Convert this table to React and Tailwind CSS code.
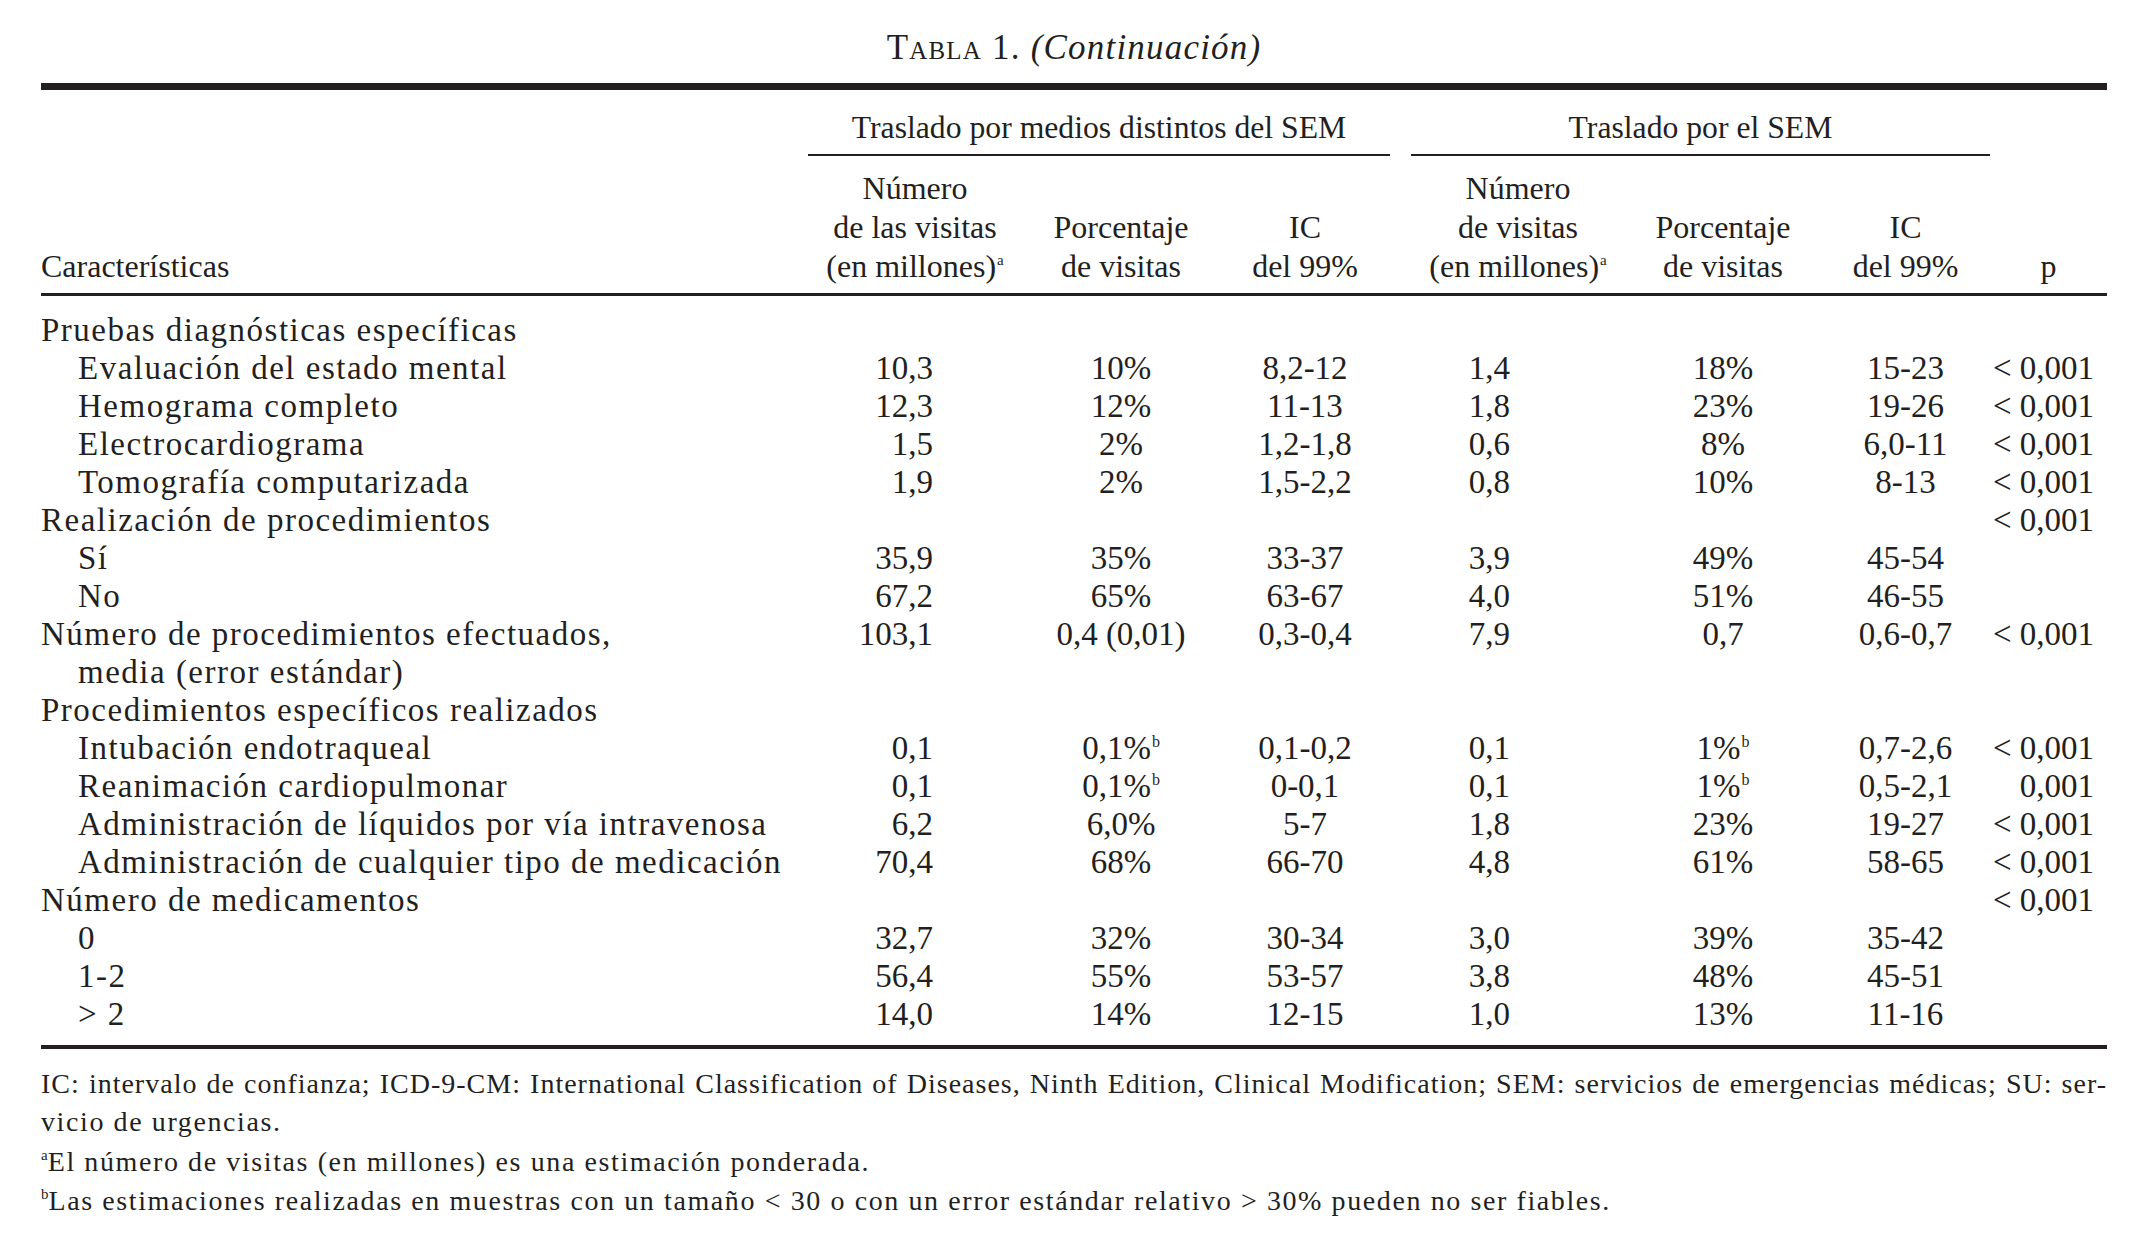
import React from "react";

const GRID =
  "grid grid-cols-[767px_214px_198px_170px_21px_214px_196px_169px_117px]";

const rows = [
  { label: "Pruebas diagnósticas específicas" },
  { label: "Evaluación del estado mental", indent: true, v: ["10,3", "10%", "8,2-12", "1,4", "18%", "15-23", "< 0,001"] },
  { label: "Hemograma completo", indent: true, v: ["12,3", "12%", "11-13", "1,8", "23%", "19-26", "< 0,001"] },
  { label: "Electrocardiograma", indent: true, v: ["1,5", "2%", "1,2-1,8", "0,6", "8%", "6,0-11", "< 0,001"] },
  { label: "Tomografía computarizada", indent: true, v: ["1,9", "2%", "1,5-2,2", "0,8", "10%", "8-13", "< 0,001"] },
  { label: "Realización de procedimientos", v: ["", "", "", "", "", "", "< 0,001"] },
  { label: "Sí", indent: true, v: ["35,9", "35%", "33-37", "3,9", "49%", "45-54", ""] },
  { label: "No", indent: true, v: ["67,2", "65%", "63-67", "4,0", "51%", "46-55", ""] },
  { label: "Número de procedimientos efectuados,", v: ["103,1", "0,4 (0,01)", "0,3-0,4", "7,9", "0,7", "0,6-0,7", "< 0,001"] },
  { label: "media (error estándar)", indent: true },
  { label: "Procedimientos específicos realizados" },
  { label: "Intubación endotraqueal", indent: true, v: ["0,1", ["0,1%", "b"], "0,1-0,2", "0,1", ["1%", "b"], "0,7-2,6", "< 0,001"] },
  { label: "Reanimación cardiopulmonar", indent: true, v: ["0,1", ["0,1%", "b"], "0-0,1", "0,1", ["1%", "b"], "0,5-2,1", "0,001"] },
  { label: "Administración de líquidos por vía intravenosa", indent: true, v: ["6,2", "6,0%", "5-7", "1,8", "23%", "19-27", "< 0,001"] },
  { label: "Administración de cualquier tipo de medicación", indent: true, v: ["70,4", "68%", "66-70", "4,8", "61%", "58-65", "< 0,001"] },
  { label: "Número de medicamentos", v: ["", "", "", "", "", "", "< 0,001"] },
  { label: "0", indent: true, v: ["32,7", "32%", "30-34", "3,0", "39%", "35-42", ""] },
  { label: "1-2", indent: true, v: ["56,4", "55%", "53-57", "3,8", "48%", "45-51", ""] },
  { label: "> 2", indent: true, v: ["14,0", "14%", "12-15", "1,0", "13%", "11-16", ""] },
];

function Val({ x }) {
  if (Array.isArray(x)) {
    return (
      <>
        {x[0]}
        <sup className="text-[16px] -top-[12px] ml-[1px]">{x[1]}</sup>
      </>
    );
  }
  return <>{x}</>;
}

function BodyRow({ r }) {
  const v = r.v || ["", "", "", "", "", "", ""];
  return (
    <div className={`${GRID} leading-[38px] whitespace-nowrap`}>
      <div className={`${r.indent ? "pl-[37px]" : ""} tracking-[1.5px]`}>{r.label}</div>
      <div className="text-right pr-[89px]"><Val x={v[0]} /></div>
      <div className="text-center"><Val x={v[1]} /></div>
      <div className="text-center"><Val x={v[2]} /></div>
      <div />
      <div className="text-right pr-[115px]"><Val x={v[3]} /></div>
      <div className="text-center"><Val x={v[4]} /></div>
      <div className="text-center"><Val x={v[5]} /></div>
      <div className="text-right pr-[13px]"><Val x={v[6]} /></div>
    </div>
  );
}

function SupA() {
  return <sup className="text-[15px] -top-[12px] ml-[1px]">a</sup>;
}

export default function App() {
  return (
    <div className="w-[2141px] h-[1254px] bg-white text-[#231f20] font-['Liberation_Serif',serif] overflow-hidden">
      <div className="ml-[41px] w-[2066px]">
        {/* Title */}
        <div className="pt-[28px] text-[35px] leading-[40px] text-center tracking-[1.2px] whitespace-nowrap">
          <span className="[font-variant-caps:small-caps]">Tabla</span> 1.{" "}
          <span className="italic">(Continuación)</span>
        </div>

        {/* Thick top rule */}
        <div className="mt-[15px] h-[7px] bg-[#231f20]" />

        {/* Group headers */}
        <div className={`${GRID} mt-[19px] text-[31.7px] leading-[38px] whitespace-nowrap`}>
          <div className="col-start-2 col-span-3 text-center pb-[7px] border-b-2 border-[#231f20]">
            Traslado por medios distintos del SEM
          </div>
          <div className="col-start-6 col-span-3 text-center pb-[7px] border-b-2 border-[#231f20]">
            Traslado por el SEM
          </div>
        </div>

        {/* Column headers */}
        <div className={`${GRID} mt-[13px] items-end text-[32px] leading-[39px] whitespace-nowrap pb-[7px] border-b-[3px] border-[#231f20]`}>
          <div>Características</div>
          <div className="text-center">
            <div>Número</div>
            <div>de las visitas</div>
            <div>(en millones)<SupA /></div>
          </div>
          <div className="text-center">
            <div>Porcentaje</div>
            <div>de visitas</div>
          </div>
          <div className="text-center">
            <div>IC</div>
            <div>del 99%</div>
          </div>
          <div />
          <div className="text-center">
            <div>Número</div>
            <div>de visitas</div>
            <div>(en millones)<SupA /></div>
          </div>
          <div className="text-center">
            <div>Porcentaje</div>
            <div>de visitas</div>
          </div>
          <div className="text-center">
            <div>IC</div>
            <div>del 99%</div>
          </div>
          <div className="text-center">p</div>
        </div>

        {/* Body */}
        <div className="pt-[15px] pb-[12px] text-[33px] border-b-4 border-[#231f20]">
          {rows.map((r, i) => (
            <BodyRow key={i} r={r} />
          ))}
        </div>

        {/* Footnotes */}
        <div className="pt-[16px] text-[28px] leading-[38px] tracking-[1.6px]">
          <div className="text-justify [text-align-last:justify] whitespace-nowrap tracking-[1px]">
            IC: intervalo de confianza; ICD-9-CM: International Classification of Diseases, Ninth Edition, Clinical Modification; SEM: servicios de emergencias médicas; SU: ser-
          </div>
          <div>vicio de urgencias.</div>
          <div className="mt-[2px]">
            <sup className="text-[15px] -top-[11px] tracking-normal">a</sup>El número de visitas (en millones) es una estimación ponderada.
          </div>
          <div className="mt-[1px]">
            <sup className="text-[15px] -top-[11px] tracking-normal">b</sup>Las estimaciones realizadas en muestras con un tamaño &lt; 30 o con un error estándar relativo &gt; 30% pueden no ser fiables.
          </div>
        </div>
      </div>
    </div>
  );
}
